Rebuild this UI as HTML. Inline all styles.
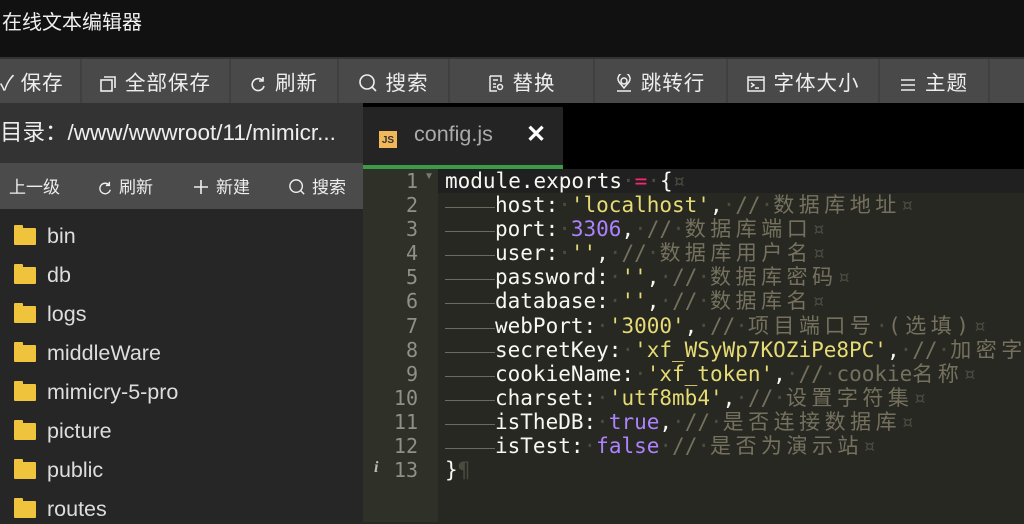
<!DOCTYPE html>
<html><head><meta charset="utf-8"><style>
*{margin:0;padding:0;box-sizing:border-box}
body{width:1024px;height:522px;overflow:hidden;background:#272822;font-family:"Liberation Sans","Noto Sans CJK SC",sans-serif;position:relative}
.top{position:absolute;left:0;top:0;width:1024px;height:57px;background:#111;color:#eee;font-size:20px;line-height:46px;padding-left:2px}
.tb{position:absolute;left:0;top:57px;width:1024px;height:46px;background:#494949;border-top:2px solid #333}
.tb div{position:absolute;top:0;height:44px;line-height:44px;color:#eee;font-size:20.5px;letter-spacing:1px;text-align:center;border-right:2px solid #404040;font-family:"Noto Sans CJK SC",sans-serif}
.tb svg{vertical-align:-2px;margin-right:9px}
.side{position:absolute;left:0;top:103px;width:363px;height:419px;background:#262626}
.path{height:60px;background:#333;color:#eee;font-size:22.5px;line-height:60px;white-space:nowrap;font-family:"Liberation Sans","Noto Sans CJK SC",sans-serif}
.sub{height:46px;background:#4b4b4b;color:#eee;font-size:17px;line-height:46px;position:relative;font-family:"Noto Sans CJK SC",sans-serif}
.sub span{position:absolute;top:0}
.sub svg{vertical-align:-2px;margin-right:7px}
.f{position:absolute;left:14px;color:#ddd;font-size:21.5px;height:30px;line-height:30px}
.f i{display:inline-block;width:22px;height:17px;background:#f0c33c;margin-right:11px;vertical-align:-2px;position:relative;border-radius:1px}
.f i:before{content:"";position:absolute;left:0;top:-3px;width:9px;height:4px;background:#f0c33c;border-radius:1px 1px 0 0}
.tabbar{position:absolute;left:363px;top:103px;width:661px;height:66px;background:#000}
.tab{position:absolute;left:0;top:4px;width:200px;height:62px;background:#242424;border-bottom:4px solid #3a9c46}
.js{position:absolute;left:16px;top:24px;width:18px;height:17px;background:#f1b85a;color:#333;font-size:10px;font-weight:bold;line-height:20px;text-align:center}
.tab .n{position:absolute;left:51px;top:15px;color:#aaa;font-size:21.5px}
.tab .x{position:absolute;left:163px;top:13px;color:#fff;font-size:24px;font-weight:bold}
.gut{position:absolute;left:363px;top:169px;width:75px;height:353px;background:#2f3129}
.ln{position:absolute;left:363px;width:55px;text-align:right;color:#8f908a;font-family:"DejaVu Sans Mono",monospace;font-size:20px}
.hl{position:absolute;left:438px;top:169px;width:586px;height:24px;background:#202020}
.code{position:absolute;left:445px;top:169px;font-family:"DejaVu Sans Mono","Noto Sans CJK SC",monospace;font-size:21px;line-height:24.1px;color:#f8f8f2;white-space:pre}
.s{color:#e6db74}.nm{color:#ae81ff}.c{color:#75715e}.o{color:#f92672}.d{color:#4b4b40}
.t{display:inline-block;width:50px;height:12px;border-bottom:1px solid #6a6a60;vertical-align:4px}
.cj{letter-spacing:4.5px}
</style></head><body>
<div class="top">在线文本编辑器</div>
<div class="tb">
<div style="left:0;width:82px;text-align:left;padding-left:0">✓ 保存</div>
<div style="left:82px;width:149px"><svg width="16" height="16" viewBox="0 0 16 16" fill="none" stroke="#eee" stroke-width="1.6"><rect x="1" y="4" width="11" height="11"/><path d="M4 1h11v11"/></svg>全部保存</div>
<div style="left:231px;width:108px"><svg width="16" height="16" viewBox="0 0 16 16" fill="none" stroke="#eee" stroke-width="1.6"><path d="M13 5A6 6 0 1 0 14 10"/><path d="M13 1v4H9"/></svg>刷新</div>
<div style="left:339px;width:111px"><svg width="18" height="18" viewBox="0 0 18 18" fill="none" stroke="#eee" stroke-width="1.6"><circle cx="8" cy="8" r="7"/><path d="M13 13l4 4"/></svg>搜索</div>
<div style="left:450px;width:145px"><svg width="16" height="17" viewBox="0 0 16 17" fill="none" stroke="#eee" stroke-width="1.5"><path d="M2 1h11v6M2 1v15h7M5 5h5M5 9h3M5 12h3"/><circle cx="12" cy="12" r="2.5"/></svg>替换</div>
<div style="left:595px;width:133px"><svg width="16" height="18" viewBox="0 0 16 18" fill="none" stroke="#eee" stroke-width="1.5"><circle cx="8" cy="7" r="3"/><path d="M8 14L3 8a6 6 0 1 1 10 0z"/><path d="M1 17h14"/></svg>跳转行</div>
<div style="left:728px;width:152px"><svg width="18" height="16" viewBox="0 0 18 16" fill="none" stroke="#eee" stroke-width="1.5"><rect x="1" y="1" width="16" height="14"/><path d="M1 4h16M4 7l3 2-3 2M8 12h4"/></svg>字体大小</div>
<div style="left:880px;width:110px"><svg width="16" height="14" viewBox="0 0 16 14" fill="none" stroke="#eee" stroke-width="1.6"><path d="M1 2h14M1 7h14M1 12h14"/></svg>主题</div>
</div>
<div class="side">
<div class="path">目录：/www/wwwroot/11/mimicr...</div>
<div class="sub">
<span style="left:9px">上一级</span>
<span style="left:98px"><svg width="14" height="14" viewBox="0 0 16 16" fill="none" stroke="#eee" stroke-width="1.6"><path d="M13 5A6 6 0 1 0 14 10"/><path d="M13 1v4H9"/></svg>刷新</span>
<span style="left:193px"><svg width="16" height="16" viewBox="0 0 16 16" fill="none" stroke="#eee" stroke-width="1.6"><path d="M8 1v14M1 8h14"/></svg>新建</span>
<span style="left:289px"><svg width="16" height="16" viewBox="0 0 18 18" fill="none" stroke="#eee" stroke-width="1.6"><circle cx="8" cy="8" r="7"/><path d="M13 13l4 4"/></svg>搜索</span>
</div>
</div>
<div class="f" style="top:221px"><i></i>bin</div>
<div class="f" style="top:260px"><i></i>db</div>
<div class="f" style="top:299px"><i></i>logs</div>
<div class="f" style="top:338px"><i></i>middleWare</div>
<div class="f" style="top:377px"><i></i>mimicry-5-pro</div>
<div class="f" style="top:416px"><i></i>picture</div>
<div class="f" style="top:455px"><i></i>public</div>
<div class="f" style="top:494px"><i></i>routes</div>
<div class="tabbar"><div class="tab"><div class="js">JS</div><div class="n">config.js</div><div class="x">✕</div></div></div>
<div class="gut"></div>
<div class="hl"></div>
<div class="ln" style="top:169px;line-height:24.1px">1<br>2<br>3<br>4<br>5<br>6<br>7<br>8<br>9<br>10<br>11<br>12<br>13</div>
<div style="position:absolute;left:424px;top:171px;color:#777;font-size:10px">▼</div>
<div style="position:absolute;left:374px;top:459px;color:#bbb;font-size:16px;font-style:italic;font-weight:bold;font-family:'Liberation Serif',serif">i</div>
<div class="code">module.exports<span class="d">·</span><span class="o">=</span><span class="d">·</span>{<span class="d">¤</span>
<span class="t"></span>host:<span class="d">·</span><span class="s">'localhost'</span>,<span class="d">·</span><span class="c">//<span class="d">·</span><span class="cj">数据库地址</span></span><span class="d">¤</span>
<span class="t"></span>port:<span class="d">·</span><span class="nm">3306</span>,<span class="d">·</span><span class="c">//<span class="d">·</span><span class="cj">数据库端口</span></span><span class="d">¤</span>
<span class="t"></span>user:<span class="d">·</span><span class="s">''</span>,<span class="d">·</span><span class="c">//<span class="d">·</span><span class="cj">数据库用户名</span></span><span class="d">¤</span>
<span class="t"></span>password:<span class="d">·</span><span class="s">''</span>,<span class="d">·</span><span class="c">//<span class="d">·</span><span class="cj">数据库密码</span></span><span class="d">¤</span>
<span class="t"></span>database:<span class="d">·</span><span class="s">''</span>,<span class="d">·</span><span class="c">//<span class="d">·</span><span class="cj">数据库名</span></span><span class="d">¤</span>
<span class="t"></span>webPort:<span class="d">·</span><span class="s">'3000'</span>,<span class="d">·</span><span class="c">//<span class="d">·</span><span class="cj">项目端口号</span><span class="d">·</span><span class="cj">(选填)</span></span><span class="d">¤</span>
<span class="t"></span>secretKey:<span class="d">·</span><span class="s">'xf_WSyWp7KOZiPe8PC'</span>,<span class="d">·</span><span class="c">//<span class="d">·</span><span class="cj">加密字符</span></span>
<span class="t"></span>cookieName:<span class="d">·</span><span class="s">'xf_token'</span>,<span class="d">·</span><span class="c">//<span class="d">·</span>cookie<span class="cj">名称</span></span><span class="d">¤</span>
<span class="t"></span>charset:<span class="d">·</span><span class="s">'utf8mb4'</span>,<span class="d">·</span><span class="c">//<span class="d">·</span><span class="cj">设置字符集</span></span><span class="d">¤</span>
<span class="t"></span>isTheDB:<span class="d">·</span><span class="nm">true</span>,<span class="d">·</span><span class="c">//<span class="d">·</span><span class="cj">是否连接数据库</span></span><span class="d">¤</span>
<span class="t"></span>isTest:<span class="d">·</span><span class="nm">false</span><span class="d">·</span><span class="c">//<span class="d">·</span><span class="cj">是否为演示站</span></span><span class="d">¤</span>
}<span class="d">¶</span></div>
</body></html>
